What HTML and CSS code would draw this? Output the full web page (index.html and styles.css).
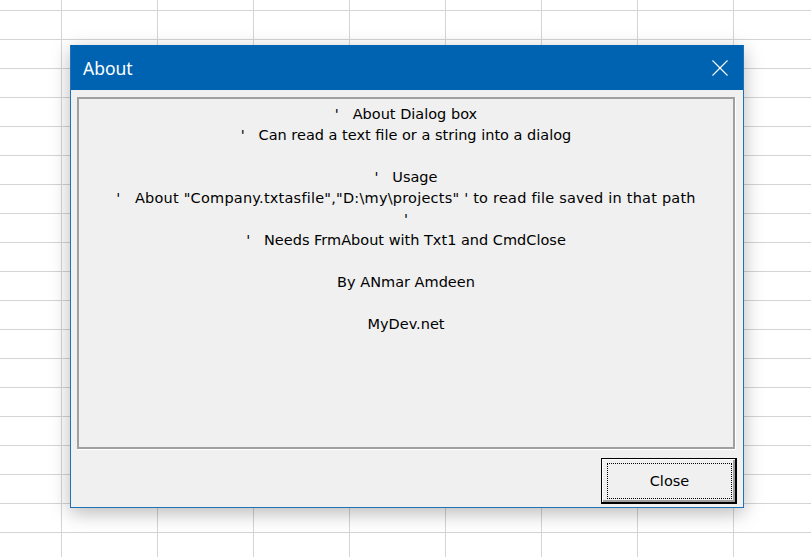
FILE: index.html
```html
<!DOCTYPE html>
<html>
<head>
<meta charset="utf-8">
<title>About</title>
<link rel="stylesheet" href="styles.css">
</head>
<body>
<div class="dialog">
  <div class="titlebar">
    <span class="title">About</span>
    <svg class="close-x" width="16" height="16" viewBox="0 0 16 16"><path d="M0.5 0.5 L15.5 15.5 M15.5 0.5 L0.5 15.5" stroke="#ffffff" stroke-width="1.1" fill="none"/></svg>
  </div>
  <div class="body">
    <div class="textbox">
      <p class="line">'   About Dialog box</p>
      <p class="line">'   Can read a text file or a string into a dialog</p>
      <p class="line"></p>
      <p class="line">'   Usage</p>
      <p class="line line-wide">'   About "Company.txtasfile","D:\my\projects" ' to read file saved in that path</p>
      <p class="line">'</p>
      <p class="line">'   Needs FrmAbout with Txt1 and CmdClose</p>
      <p class="line"></p>
      <p class="line">By ANmar Amdeen</p>
      <p class="line"></p>
      <p class="line">MyDev.net</p>
    </div>
    <div class="footer">
      <button class="btn" type="button"><span class="focus">Close</span></button>
    </div>
  </div>
</div>
</body>
</html>
```

FILE: styles.css
```css
html, body {
  margin: 0;
  padding: 0;
}
body {
  width: 811px;
  height: 557px;
  overflow: hidden;
  box-sizing: border-box;
  padding: 45px 0 0 70px;
  background-color: #ffffff;
  background-image:
    linear-gradient(to right, #d4d4d4 1px, transparent 1px),
    linear-gradient(to bottom, #d4d4d4 1px, transparent 1px);
  background-size: 96px 29px;
  background-position: 61px 10px;
  font-family: "DejaVu Sans", Verdana, sans-serif;
}
.dialog {
  width: 674px;
  height: 463px;
  box-sizing: border-box;
  border: 1px solid #1f72b8;
  border-top-color: #0063b1;
  background: #f0f0f0;
  box-shadow: 0 5px 18px rgba(0, 0, 0, 0.28);
  display: flex;
  flex-direction: column;
}
.titlebar {
  height: 44px;
  flex: none;
  background: #0063b1;
  display: flex;
  align-items: center;
  justify-content: space-between;
  padding: 0 15px 0 12px;
}
.title {
  color: #ffffff;
  font-family: "Noto Sans", "Open Sans", sans-serif;
  font-size: 17.5px;
  line-height: 1;
  margin-top: 1px;
}
.close-x {
  display: block;
}
.body {
  flex: 1;
  padding: 7px 0 0 6px;
  display: flex;
  flex-direction: column;
}
.textbox {
  width: 658px;
  height: 352px;
  box-sizing: border-box;
  border: 2px solid #a0a0a0;
  box-shadow: 1px 1px 0 #ffffff;
  padding-top: 5px;
  text-align: center;
  color: #000000;
  font-size: 14.5px;
}
.line {
  margin: 0;
  height: 21px;
  line-height: 21px;
  white-space: pre;
}
.line-wide {
  letter-spacing: 0.22px;
}
.footer {
  margin-top: 9px;
  display: flex;
  justify-content: flex-end;
  padding-right: 6px;
}
.btn {
  width: 136px;
  height: 46px;
  box-sizing: border-box;
  margin: 0;
  padding: 4px 3px 3px 5px;
  background: #f0f0f0;
  border-style: solid;
  border-color: #000000;
  border-width: 1px 2px 2px 1px;
  box-shadow: inset 1px 1px 0 #ffffff, inset -2px -2px 0 #a0a0a0;
  font-family: "DejaVu Sans", Verdana, sans-serif;
  font-size: 14.5px;
  color: #000000;
  display: flex;
}
.focus {
  flex: 1;
  border: 1px dotted #000000;
  display: flex;
  align-items: center;
  justify-content: center;
}
```
